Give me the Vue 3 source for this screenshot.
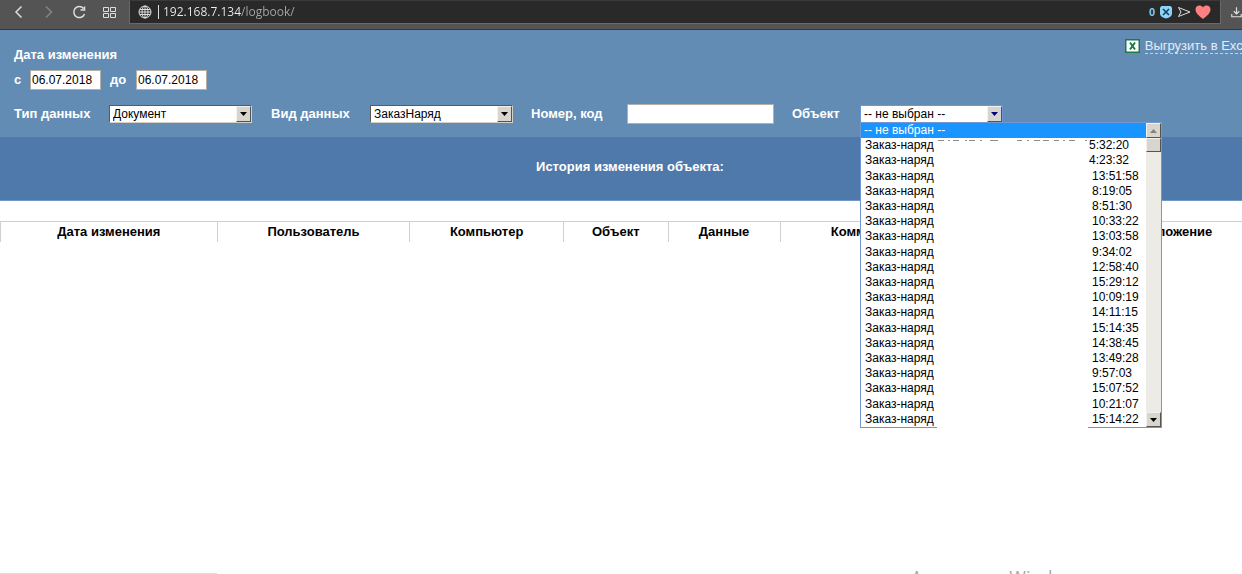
<script setup>
import { ref } from 'vue'

const address = ref('192.168.7.134/logbook/')
const dateFrom = ref('06.07.2018')
const dateTo = ref('06.07.2018')
const code = ref('')

const times = [
  '5:32:20', '4:23:32', '13:51:58', '8:19:05', '8:51:30', '10:33:22', '13:03:58',
  '9:34:02', '12:58:40', '15:29:12', '10:09:19', '14:11:15', '15:14:35', '14:38:45',
  '13:49:28', '9:57:03', '15:07:52', '10:21:07', '15:14:22',
]

const columns = [
  { key: 'date', title: 'Дата изменения' },
  { key: 'user', title: 'Пользователь' },
  { key: 'computer', title: 'Компьютер' },
  { key: 'object', title: 'Объект' },
  { key: 'data', title: 'Данные' },
  { key: 'comment', title: 'Комментарий' },
  { key: 'spare', title: '' },
  { key: 'app', title: 'Приложение' },
]
</script>

<template>
  <div class="window">
    <header class="browser">
      <nav class="nav">
        <button type="button" aria-label="Назад">
          <svg width="16" height="16" viewBox="0 0 16 16"><path d="M10.500 2.500 5 8l5.500 5.500" /></svg>
        </button>
        <button type="button" class="dim" aria-label="Вперёд">
          <svg width="16" height="16" viewBox="0 0 16 16"><path d="M5 2.500 10.500 8 5 13.500" /></svg>
        </button>
        <button type="button" aria-label="Обновить">
          <svg width="16" height="16" viewBox="0 0 16 16"><path d="M12.500 4.500A5.500 5.500 0 1 0 13.500 10M13.500 2.500V6H9.500" /></svg>
        </button>
        <button type="button" aria-label="Экспресс-панель">
          <svg width="16" height="16" viewBox="0 0 16 16" class="thin">
            <path d="M2.500 3.500h5v4h-5zM9.500 3.500h5v4h-5zM2.500 9.500h5v4h-5zM9.500 9.500h5v4h-5z" />
          </svg>
        </button>
      </nav>
      <div class="address">
        <svg width="14" height="14" viewBox="0 0 14 14" class="thin globe">
          <circle cx="7" cy="7" r="6" />
          <ellipse cx="7" cy="7" rx="3" ry="6" />
          <path d="M7 1v12M1 7h12M2 4.500h10M2 9.500h10" />
        </svg>
        <span class="caret"></span>
        <input v-model="address" type="text" aria-label="Адрес" />
        <span class="blocked">0</span>
        <button type="button" aria-label="Блокировка рекламы">
          <svg width="14" height="14" viewBox="0 0 14 14">
            <path d="M2.500 1h9L13 2.500v6.500Q12.500 12 7 13.500 1.500 12 1 9V2.500z" fill="#8ad4fb" stroke="none" />
            <path d="m4 4 6 6M10 4l-6 6" stroke="#173c50" stroke-width="1.500" />
          </svg>
        </button>
        <button type="button" aria-label="Отправить">
          <svg width="14" height="12" viewBox="0 0 14 12" class="thin"><path d="M1.500 1.500 13 6 1.500 10.500 4 6z" /></svg>
        </button>
        <button type="button" aria-label="В закладки">
          <svg width="16" height="14" viewBox="0 0 16 14">
            <path d="M8 14C4 11 .500 8 .500 4.500.500 0 6-.500 8 2.500 10-.500 15.500 0 15.500 4.500 15.500 8 12 11 8 14z" fill="#ff8080" stroke="none" />
          </svg>
        </button>
      </div>
      <button type="button" class="downloads" aria-label="Загрузки">
        <svg width="14" height="14" viewBox="0 0 14 14"><path d="M7 1v8M3.500 6 7 9.500 10.500 6M1 9.500V13h12V9.500" /></svg>
      </button>
    </header>

    <main class="page">
      <form class="filters" @submit.prevent>
        <a class="export" href="#">
          <svg width="15" height="14" viewBox="0 0 15 14">
            <path d="M0 0h15v14H0z" fill="#1d7a46" />
            <path d="M1.500 1.500h12v11h-12z" fill="#fff" />
            <path d="m5 3.500 5 7M10 3.500l-5 7" stroke="#1d7a46" stroke-width="2" />
          </svg>
          <span>Выгрузить в Excel</span>
        </a>
        <div class="title">Дата изменения</div>
        <div class="dates">
          <label for="from">с</label>
          <input id="from" v-model="dateFrom" type="text" />
          <label for="to" class="until">до</label>
          <input id="to" v-model="dateTo" type="text" />
        </div>
        <div class="fields">
          <label for="type">Тип данных</label>
          <div class="select">
            <select id="type"><option>Документ</option></select>
            <span class="arrow"><svg width="7" height="4" viewBox="0 0 7 4"><path d="M0 0h7L3.500 4z" /></svg></span>
          </div>
          <label for="kind">Вид данных</label>
          <div class="select">
            <select id="kind"><option>ЗаказНаряд</option></select>
            <span class="arrow"><svg width="7" height="4" viewBox="0 0 7 4"><path d="M0 0h7L3.500 4z" /></svg></span>
          </div>
          <label for="code">Номер, код</label>
          <input id="code" v-model="code" type="text" />
          <label for="object">Объект</label>
          <div class="select open">
            <select id="object"><option>-- не выбран --</option></select>
            <span class="arrow"><svg width="7" height="4" viewBox="0 0 7 4"><path d="M0 0h7L3.500 4z" /></svg></span>
            <div class="popup">
              <ul role="listbox" aria-label="Объект">
                <li role="option" aria-selected="true" class="current">-- не выбран --</li>
                <li v-for="(time, i) in times" :key="time" role="option" aria-selected="false">
                  <span>Заказ-наряд</span>
                  <span class="time" :class="{ early: i < 2 }">{{ time }}</span>
                </li>
              </ul>
              <div class="scroll">
                <span class="arrow up"><svg width="7" height="4" viewBox="0 0 7 4"><path d="M0 4h7L3.500 0z" /></svg></span>
                <span class="thumb"></span>
                <span class="arrow down"><svg width="7" height="4" viewBox="0 0 7 4"><path d="M0 0h7L3.500 4z" /></svg></span>
              </div>
              <svg class="scraps" width="151" height="1" viewBox="0 0 151 1">
                <path d="M1 .500h6M11 .500h2M16 .500h6M28 .500h2M32 .500h6M43 .500h2M53 .500h8M80 .500h5M90 .500h2M97 .500h6M106 .500h6M117 .500h5M126 .500h2M132 .500h6M148 .500h2" />
              </svg>
              <span class="gap"></span>
            </div>
          </div>
        </div>
      </form>
      <h1 class="history">История изменения объекта:</h1>
      <table class="log">
        <thead>
          <tr><th v-for="c in columns" :key="c.key" :class="c.key" scope="col">{{ c.title }}</th></tr>
        </thead>
      </table>
    </main>
    <div class="status"></div>
    <div class="watermark">Активация Windows</div>
  </div>
</template>

<style>
body {
  margin: 0;
  background: #fff;
}
</style>

<style scoped>
.window {
  min-height: 100vh;
  overflow: hidden;
  position: relative;
  font: 12px "Liberation Sans", Arial, sans-serif;
  color: #000;
}
.window * {
  box-sizing: border-box;
}
button {
  display: flex;
  padding: 0;
  border: 0;
  background: none;
}
.browser {
  display: flex;
  height: 30px;
  overflow: hidden;
  background: #545454;
  border-bottom: 1px solid #303a44;
}
.browser svg {
  fill: none;
  stroke: #dedede;
  stroke-width: 1.5;
}
.browser svg.thin {
  stroke-width: 1;
}
.nav {
  display: flex;
  gap: 14px;
  align-items: center;
  width: 129px;
  padding: 0 0 5px 11px;
  flex: none;
}
.nav .dim svg {
  stroke: #858585;
}
.address {
  flex: 1;
  display: flex;
  align-items: center;
  gap: 4px;
  height: 24px;
  padding: 0 9px 0 8px;
  background: #292929;
  border: 1px solid #696969;
  border-top-color: #3a3a3a;
}
.caret {
  width: 1px;
  height: 14px;
  margin-left: 2px;
  background: #ddd;
}
.address input {
  flex: 1;
  min-width: 0;
  height: 20px;
  padding: 0 0 2px;
  border: 0;
  outline: 0;
  font: 12px "Open Sans", sans-serif;
  color: transparent;
  background: linear-gradient(90deg, #f0f0f0 78px, #a8a8a8 78px);
  background-clip: text;
}
.blocked {
  font-weight: bold;
  font-size: 11px;
  color: #82cff8;
}
.downloads {
  width: 21px;
  flex: none;
  padding: 5px 0 0 10px;
}
.page {
  width: calc(100% + 18px);
}
.filters {
  position: relative;
  padding: 17px 14px 13px;
  background: #628cb4;
}
.filters label,
.title {
  font-size: 13px;
  font-weight: bold;
  line-height: 16px;
  color: #fff;
}
.filters input {
  height: 20px;
  padding: 0 1px;
  border: 1px solid #b5afa8;
  background: #fff;
  font: 12px "Liberation Sans", Arial, sans-serif;
  color: #000;
}
.export {
  position: absolute;
  top: 9px;
  right: 7px;
  display: flex;
  gap: 5px;
  color: #e4edf6;
  text-decoration: none;
  white-space: nowrap;
}
.export svg {
  fill: none;
}
.export span {
  font-size: 13px;
  line-height: 14px;
  border-bottom: 1px dashed #c0d2e4;
}
.dates {
  display: flex;
  align-items: center;
  margin: 7px 0 14px;
}
.dates label {
  width: 16px;
}
.dates input {
  width: 71px;
}
.dates .until {
  width: 26px;
  margin-left: 9px;
}
.fields {
  display: grid;
  grid-template-columns: 95px 162px 99px 161px 96px 165px 68px 142px;
  align-items: center;
  height: 20px;
}
.fields input {
  width: 147px;
}
.select {
  position: relative;
  display: flex;
  width: 143px;
  height: 18px;
  border: 1px solid #5a5a58;
  border-right-color: #d4d0c8;
  border-bottom-color: #d4d0c8;
  background: #fff;
}
.select select {
  appearance: none;
  width: 100%;
  padding: 0 0 0 3px;
  border: 0;
  outline: 0;
  background: none;
  font: 12px "Liberation Sans", Arial, sans-serif;
  color: #000;
}
.arrow {
  display: flex;
  flex: none;
  align-items: center;
  justify-content: center;
  width: 15px;
  height: 16px;
  background: #d8d5ce;
  border: 1px solid #f4f2ee;
  border-right-color: #56544f;
  border-bottom-color: #56544f;
  pointer-events: none;
}
.scroll .arrow {
  height: 15px;
}
.open {
  border-color: #6b95df;
}
.open > .arrow svg {
  fill: #000080;
}
.popup {
  position: absolute;
  top: 16px;
  left: -1px;
  z-index: 2;
  display: flex;
  width: 302px;
  height: 306px;
  border: 1px solid #7397d3;
  background: #fff;
}
.popup ul {
  flex: 1;
  display: grid;
  grid-auto-rows: 1fr;
  margin: 0;
  padding: 0;
  list-style: none;
}
.popup li {
  display: flex;
  align-items: center;
  padding-left: 4px;
  line-height: 15px;
}
.popup .current {
  padding-left: 3px;
  background: #1a94ff;
  color: #fff;
}
.popup .time {
  width: 54px;
  margin-left: auto;
}
.popup .early {
  width: 57px;
}
.scroll {
  display: flex;
  flex-direction: column;
  width: 15px;
  background: #ecebe6;
}
.up svg {
  fill: #85827c;
}
.thumb {
  height: 14px;
  background: #d8d5ce;
  border: 1px solid #f4f2ee;
  border-right-color: #56544f;
  border-bottom-color: #56544f;
}
.down {
  margin-top: auto;
}
.scraps {
  position: absolute;
  top: 17px;
  left: 76px;
  stroke: #8c8c8c;
  stroke-width: 1;
}
.gap {
  position: absolute;
  left: 76px;
  bottom: -1px;
  width: 151px;
  height: 1px;
  background: #fff;
}
.history {
  margin: 0;
  padding: 22px 0 25px;
  background: #4f79ab;
  border-bottom: 1px solid #7299c8;
  color: #fff;
  font-size: 13px;
  line-height: 16px;
  text-align: center;
}
.log {
  width: 100%;
  margin-top: 20px;
  border-collapse: collapse;
  table-layout: fixed;
  border-top: 1px solid #d0d0d0;
}
.log th {
  height: 20px;
  padding: 0;
  border-left: 1px solid #d0d0d0;
  font-size: 13px;
  line-height: 16px;
}
.date { width: 17.2%; }
.user { width: 15.3%; }
.computer { width: 12.2%; }
.object { width: 8.3%; }
.data { width: 8.9%; }
.comment { width: 15%; }
.spare { width: 9.1%; }
.status {
  position: absolute;
  left: 0;
  bottom: 0;
  width: 217px;
  height: 1px;
  background: #ddd;
}
.watermark {
  position: absolute;
  left: 911px;
  bottom: -15px;
  font: 18px/24px "Open Sans", sans-serif;
  color: #a8a8a8;
}
</style>
